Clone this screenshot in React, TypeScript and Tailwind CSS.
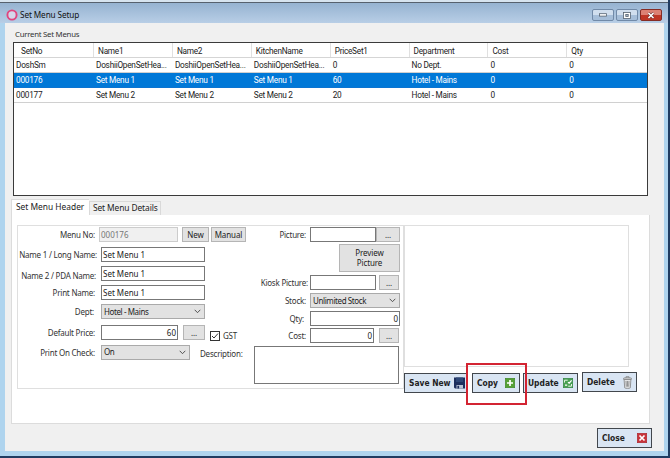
import type { ReactNode } from "react";
import clsx from "clsx";

const columns = ["SetNo", "Name1", "Name2", "KitchenName", "PriceSet1", "Department", "Cost", "Qty"];

const rows = [
  ["DoshSm", "DoshiiOpenSetHea...", "DoshiiOpenSetHea...", "DoshiiOpenSetHea...", "0", "No Dept.", "0", "0"],
  ["000176", "Set Menu 1", "Set Menu 1", "Set Menu 1", "60", "Hotel - Mains", "0", "0"],
  ["000177", "Set Menu 2", "Set Menu 2", "Set Menu 2", "20", "Hotel - Mains", "0", "0"],
];

function Label({ children, className }: { children: ReactNode; className?: string }) {
  return (
    <span
      className={clsx(
        "flex shrink-0 justify-end whitespace-nowrap text-[8px] leading-[10px] tracking-[-0.22px] text-[#333]",
        className
      )}
    >
      {children}
    </span>
  );
}

function Box({ children, className }: { children?: ReactNode; className?: string }) {
  return (
    <div
      className={clsx(
        "flex h-[15px] shrink-0 items-center whitespace-nowrap border px-[1px] text-[8px] leading-[10px]",
        className
      )}
    >
      {children}
    </div>
  );
}

function Field({ children, className }: { children?: ReactNode; className?: string }) {
  return <Box className={clsx("border-[#777] bg-white text-[#222]", className)}>{children}</Box>;
}

function Select({ value, className }: { value: string; className?: string }) {
  return (
    <div
      className={clsx(
        "flex h-[15px] shrink-0 items-center justify-between border border-[#aaa] bg-[#e2e2e2] pl-[2px] pr-[3px] text-[8px] leading-[10px] text-[#222]",
        className
      )}
    >
      <span className="whitespace-nowrap tracking-[-0.4px]">{value}</span>
      <svg width="7" height="5" viewBox="0 0 7 5" fill="none" stroke="#444" strokeWidth="0.9">
        <path d="M0.7 0.8 3.5 3.7 6.3 0.8" />
      </svg>
    </div>
  );
}

function GreyButton({ children, className }: { children: ReactNode; className?: string }) {
  return (
    <button
      className={clsx(
        "flex shrink-0 items-center justify-center border border-[#b5b5b5] bg-[#e2e2e2] text-[8px] leading-[10px] tracking-[-0.1px] text-[#222]",
        className
      )}
    >
      {children}
    </button>
  );
}

function ActionButton({ label, icon, className }: { label: string; icon: ReactNode; className?: string }) {
  return (
    <button
      className={clsx(
        "flex h-[20px] shrink-0 items-center justify-between border border-[#42474d] bg-[#d9e5f3] pl-[4px] font-['DejaVu_Sans_Condensed','DejaVu_Sans',sans-serif] text-[8.4px] font-bold leading-[10px] text-[#222]",
        className
      )}
    >
      <span className="whitespace-nowrap">{label}</span>
      {icon}
    </button>
  );
}

function SaveIcon() {
  return (
    <svg width="11" height="12" viewBox="0 0 11 12">
      <path d="M0 0.5h11v11H1L0 10.5z" fill="#1d2f5e" />
      <path d="M2 0.5h7v4.5H2z" fill="#2d4777" />
      <path d="M2.5 8h6.5v3.5H2.5z" fill="#b9c4d6" />
      <path d="M3.4 8.8h1.7v2.7H3.4z" fill="#1d2f5e" />
    </svg>
  );
}

function PlusIcon() {
  return (
    <svg width="10" height="10" viewBox="0 0 10 10">
      <rect x="0.3" y="0.3" width="9.4" height="9.4" fill="#56a136" stroke="#3a8423" strokeWidth="0.6" />
      <path d="M5 2v6M2 5h6" stroke="#fff" strokeWidth="1.7" />
    </svg>
  );
}

function UpdateIcon() {
  return (
    <svg width="10" height="10" viewBox="0 0 10 10">
      <rect x="0.3" y="0.3" width="9.4" height="9.4" fill="#48a052" stroke="#2f8140" strokeWidth="0.6" />
      <path d="M1.5 4.6V2.2h3.2M8.5 6v2.2H5.2" fill="none" stroke="#e6f5e4" strokeWidth="1" />
      <path d="M2 7.2h2.2M5 4.2l1.2 1L8.6 2.4" fill="none" stroke="#fff" strokeWidth="1.2" />
    </svg>
  );
}

function TrashIcon() {
  return (
    <svg width="9" height="13" viewBox="0 0 9 13" fill="none" stroke="#808080" strokeWidth="0.8">
      <path d="M3 1.5V0.7h3v0.8" />
      <path d="M0.5 2.4c0-1 8-1 8 0v0.9h-8z" fill="#d9dadb" />
      <path d="M1.1 3.5l0.6 8.3c0.3 0.8 5.3 0.8 5.6 0l0.6-8.3z" fill="#e3e4e5" />
      <path d="M3 5l0.3 5.7M4.5 5v5.7M6 5l-0.3 5.7" />
    </svg>
  );
}

function CloseIcon() {
  return (
    <svg width="10" height="10" viewBox="0 0 10 10">
      <rect x="0.3" y="0.3" width="9.4" height="9.4" fill="#c8343b" stroke="#a92229" strokeWidth="0.6" />
      <path d="M2.5 2.5l5 5M7.5 2.5l-5 5" stroke="#fff" strokeWidth="1.7" />
    </svg>
  );
}

function TitleBar() {
  return (
    <header className="flex h-[20px] items-center bg-linear-to-b from-[#96b3d1] to-[#b8cee6] pl-[6px] pr-[6px]">
      <svg width="12" height="12" viewBox="0 0 12 12" className="mt-[4px]">
        <circle cx="6" cy="6" r="4.6" fill="#d5d6ea" stroke="#e0457f" strokeWidth="1.9" />
      </svg>
      <h1 className="ml-[2px] mt-[4px] text-[8.2px] leading-[12px] tracking-[-0.1px] text-[#111]">Set Menu Setup</h1>
      <div className="ml-auto mt-[4px] flex gap-[2px]">
        <button className="flex h-[12px] w-[22px] items-center justify-center rounded-[2px] border border-[#718aa8] bg-linear-to-b from-[#d0deee] from-50% to-[#a6bed9] to-50%">
          <svg width="8" height="4" viewBox="0 0 8 4">
            <rect x="0.5" y="0.7" width="7" height="2.4" fill="#fff" stroke="#54616f" strokeWidth="0.8" />
          </svg>
        </button>
        <button className="flex h-[12px] w-[22px] items-center justify-center rounded-[2px] border border-[#718aa8] bg-linear-to-b from-[#d0deee] from-50% to-[#a6bed9] to-50%">
          <svg width="8" height="7" viewBox="0 0 8 7">
            <rect x="0.5" y="0.5" width="7" height="6" fill="#fff" stroke="#54616f" strokeWidth="0.8" />
            <rect x="2.8" y="2.5" width="2.4" height="2" fill="#aebfd2" stroke="#54616f" strokeWidth="0.8" />
          </svg>
        </button>
        <button className="flex h-[12px] w-[22px] items-center justify-center rounded-[2px] border border-[#852c25] bg-linear-to-b from-[#dc8174] from-45% to-[#bf3626] to-50%">
          <svg width="8" height="7" viewBox="0 0 8 7">
            <path d="M1.5 1l5 5M6.5 1l-5 5" stroke="#6b3434" strokeWidth="2.6" />
            <path d="M1.5 1l5 5M6.5 1l-5 5" stroke="#fff" strokeWidth="1.6" />
          </svg>
        </button>
      </div>
    </header>
  );
}

function MenuTable() {
  return (
    <div className="ml-[8px] h-[154px] w-[635px] overflow-hidden border border-[#3a3a3a] bg-white font-['Roboto',sans-serif] text-[8.25px] leading-[10px] tracking-[-0.25px] text-[#222]">
      <div className="grid h-[15px] grid-cols-[79px_repeat(7,78.9px)] items-center border-b border-[#d5d5d5]">
        {columns.map((name, i) => (
          <span
            key={name}
            className={clsx("pt-[2px] leading-[12px]", i > 0 ? "border-l border-[#e0e0e0] pl-[4px]" : "pl-[7px]")}
          >
            {name}
          </span>
        ))}
      </div>
      {rows.map((row, r) => (
        <div
          key={row[0]}
          className={clsx(
            "grid h-[15px] grid-cols-[79px_repeat(7,78.9px)] items-center border-b",
            r === 1 ? "border-[#0b74d1] bg-[#0078d7] text-white" : "border-[#d0d0d0]"
          )}
        >
          {row.map((cell, i) => (
            <span key={i} className={clsx("whitespace-nowrap", i === 0 ? "pl-[2px]" : "pl-[3px]")}>
              {cell}
            </span>
          ))}
        </div>
      ))}
    </div>
  );
}

function LeftFields() {
  return (
    <div className="-ml-px w-[233px] shrink-0">
      <div className="mt-[1px] flex h-[15px] items-center">
        <Label className="mr-[4px] w-[78px]">Menu No:</Label>
        <Box className="w-[79px] border-[#ccc] bg-[#f0f0f0] text-[#777]">000176</Box>
        <GreyButton className="ml-[4px] h-[15px] w-[27px]">New</GreyButton>
        <GreyButton className="ml-[2px] h-[15px] w-[35px]">Manual</GreyButton>
      </div>
      <div className="mt-[5px] flex h-[15px] items-center">
        <Label className="mr-[4px] mt-[1px] w-[80px]">Name 1 / Long Name:</Label>
        <Field className="w-[104px]">Set Menu 1</Field>
      </div>
      <div className="mt-[4px] flex h-[15px] items-center">
        <Label className="mr-[5px] mt-[5px] w-[79px]">Name 2 / PDA Name:</Label>
        <Field className="w-[104px]">Set Menu 1</Field>
      </div>
      <div className="mt-[4px] flex h-[15px] items-center">
        <Label className="mr-[6px] w-[78px]">Print Name:</Label>
        <Field className="w-[104px]">Set Menu 1</Field>
      </div>
      <div className="mt-[4px] flex h-[15px] items-center">
        <Label className="mr-[7px] w-[77px]">Dept:</Label>
        <Select value="Hotel - Mains" className="w-[104px]" />
      </div>
      <div className="mt-[6px] flex h-[15px] items-center">
        <Label className="mr-[6px] w-[78px]">Default Price:</Label>
        <Field className="w-[77px] justify-end">60</Field>
        <GreyButton className="ml-[5px] h-[15px] w-[22px]">...</GreyButton>
        <div className="ml-[5px] mt-[6px] flex items-center">
          <svg width="10" height="10" viewBox="0 0 10 10" fill="none" stroke="#333">
            <rect x="0.5" y="0.5" width="9" height="9" fill="#fff" />
            <path d="M2 5l2 2 4-4.5" strokeWidth="1" />
          </svg>
          <Label className="ml-[3px]">GST</Label>
        </div>
      </div>
      <div className="mt-[4px] flex h-[16px] items-center">
        <Label className="mr-[6px] mt-[1px] w-[78px]">Print On Check:</Label>
        <Select value="On" className="w-[89px]" />
        <Label className="ml-[10px] mt-[3px]">Description:</Label>
      </div>
    </div>
  );
}

function RightFields() {
  return (
    <div className="w-[150px] shrink-0">
      <div className="mt-[1px] flex h-[15px] items-center">
        <Label className="mr-[4px] w-[56px]">Picture:</Label>
        <Field className="w-[66px]" />
        <GreyButton className="h-[15px] w-[24px]">...</GreyButton>
      </div>
      <GreyButton className="ml-[89px] mt-[2px] h-[28px] w-[61px] flex-col">
        <span className="h-[10px]">Preview</span>
        <span className="h-[10px]">Picture</span>
      </GreyButton>
      <div className="mt-[3px] flex h-[15px] items-center">
        <Label className="mr-[2px] w-[58px]">Kiosk Picture:</Label>
        <Field className="w-[66px]" />
        <GreyButton className="ml-[3px] h-[15px] w-[20px]">...</GreyButton>
      </div>
      <div className="mt-[3px] flex h-[15px] items-center">
        <Label className="mr-[4px] mt-[1px] w-[56px]">Stock:</Label>
        <Select value="Unlimited Stock" className="w-[90px]" />
      </div>
      <div className="mt-[3px] flex h-[15px] items-center">
        <Label className="mr-[6px] w-[54px]">Qty:</Label>
        <Field className="w-[90px] justify-end">0</Field>
      </div>
      <div className="mt-[2px] flex h-[15px] items-center">
        <Label className="mr-[4px] w-[56px]">Cost:</Label>
        <Field className="w-[64px] justify-end">0</Field>
        <GreyButton className="ml-[5px] h-[15px] w-[20px]">...</GreyButton>
      </div>
      <textarea className="ml-[4px] mt-[3px] block h-[38px] w-[145px] resize-none border border-[#777] bg-white" />
    </div>
  );
}

export default function App() {
  return (
    <div className="flex h-[458px] w-[670px] flex-col overflow-hidden border-b-2 border-r-2 border-[#203c61] bg-[#afd4ee] font-['Noto_Sans',sans-serif]">
      <div className="h-[3px] shrink-0 border-b border-[#56616e] bg-[#d7e4ef]" />
      <TitleBar />
      <main className="ml-[5px] h-[428px] w-[659px] bg-[#f0f0f0]">
        <h2 className="h-[19px] pl-[10px] pt-[5px] text-[7.8px] leading-[12px] tracking-[-0.25px] text-[#333]">
          Current Set Menus
        </h2>
        <MenuTable />

        <div className="ml-[6px] mt-[3px] flex h-[16px] items-end whitespace-nowrap text-[8.4px] leading-[13px] text-[#222]">
          <div className="h-[16px] w-[78px] border-l border-t border-[#dcdcdc] bg-white pl-[4px]">Set Menu Header</div>
          <div className="h-[14px] w-[72px] border border-b-0 border-[#d9d9d9] bg-[#f0f0f0] pl-[3px] leading-[12px] tracking-[-0.1px]">
            Set Menu Details
          </div>
        </div>
        <section className="ml-[6px] h-[209px] w-[639px] border border-t-0 border-[#dcdcdc] bg-white pl-[5px] pt-[10px]">
          <div className="flex">
            <div className="flex h-[164px] w-[387px] border border-[#dfdfdf]">
              <LeftFields />
              <RightFields />
            </div>
            <div className="h-[142px] w-[225px] border border-[#dfdfdf]" />
          </div>
          <div className="-mt-[16px] ml-[387px] flex items-start">
            <ActionButton label="Save New" icon={<SaveIcon />} className="w-[63px] pr-[1px]" />
            <div className="relative ml-[5px]">
              <ActionButton label="Copy" icon={<PlusIcon />} className="w-[48px] pr-[4px]" />
              <div className="absolute -left-[6px] -top-[10px] z-10 h-[42px] w-[61px] border-2 border-[#d32432]" />
            </div>
            <ActionButton label="Update" icon={<UpdateIcon />} className="ml-[3px] w-[55px] pr-[4px]" />
            <ActionButton label="Delete" icon={<TrashIcon />} className="-mt-px ml-[4px] w-[55px] pr-[4px]" />
          </div>
        </section>
        <ActionButton label="Close" icon={<CloseIcon />} className="ml-[592px] mt-[4px] w-[55px] pr-[4px]" />
      </main>
    </div>
  );
}
